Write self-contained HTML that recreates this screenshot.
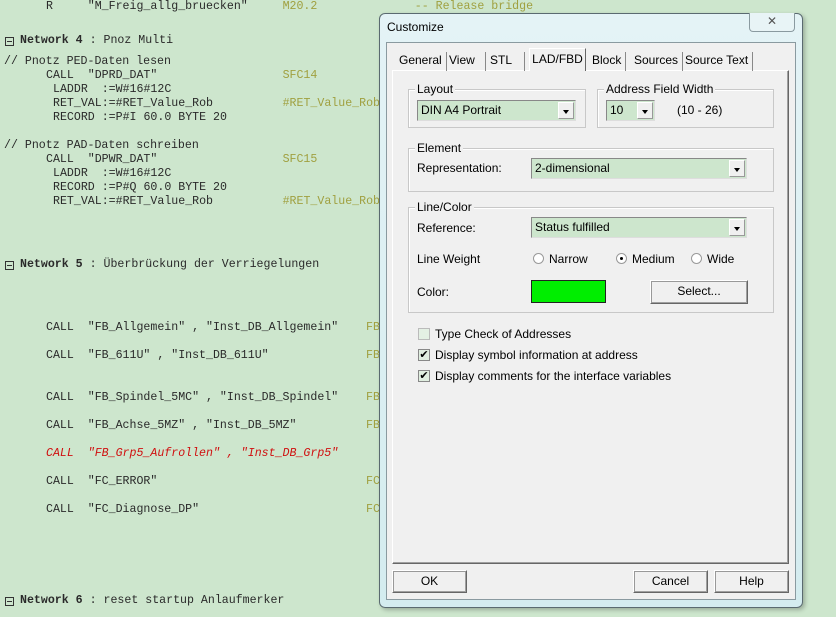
<!DOCTYPE html>
<html><head><meta charset="utf-8"><style>
*{margin:0;padding:0;box-sizing:border-box}
body{width:836px;height:617px;overflow:hidden;background:#cde6cd;position:relative;font-family:"Liberation Sans",sans-serif}
.c{position:absolute;font-family:"Liberation Mono","Courier New",monospace;font-size:11.6px;color:#2a2a2a;white-space:pre;line-height:14px}
.y{color:#a0a040}
.r{color:#d01010;font-style:italic}
.nb{font-weight:bold}
.bx{position:absolute;width:9px;height:9px;border:1px solid #333;left:5px}
.bx:after{content:"";position:absolute;left:1px;top:3px;width:5px;height:1px;background:#333}
.d{font-size:12px;color:#000;position:absolute;white-space:nowrap}
.grp{position:absolute;border:1px solid #c8c8c8;box-shadow:inset 1px 1px 0 #fff}
.lg{position:absolute;background:#f0f0f0;font-size:12px;padding:0 2px;top:-8px;left:6px;line-height:14px}
.combo{position:absolute;background:#cde6cd;border:1px solid #888;border-right-color:#ddd;border-bottom-color:#ddd;font-size:12px;padding:2px 3px;height:21px;line-height:15px}
.dd{position:absolute;right:1px;top:1px;width:16px;height:17px;background:#f0f0f0;border:1px solid #999;border-top-color:#fff;border-left-color:#fff}
.dd:after{content:"";position:absolute;left:4px;top:7px;border:3px solid transparent;border-top:4px solid #000}
.btn{position:absolute;background:#f0f0f0;border:1px solid #fff;border-right-color:#666;border-bottom-color:#666;box-shadow:1px 1px 0 #999 inset,inset -1px -1px 0 #a0a0a0;font-size:12px;text-align:center;line-height:21px}
.cb{position:absolute;width:12px;height:12px;border:1px solid #888;background:#fff;font-size:11px;line-height:10px;text-align:center}
.rad{position:absolute;width:11px;height:11px;border-radius:50%;border:1px solid #999;background:#fff}
.tab{position:absolute;top:52px;height:19px;font-size:12px;line-height:17px;padding:0 4px;border-right:1px solid #888;color:#000}
</style></head><body>
<div class="c" style="left:46px;top:0">R     "M_Freig_allg_bruecken"     <span class="y">M20.2</span>              <span class="y">-- Release bridge</span></div>
<div class="bx" style="top:37px"></div><div class="c nb" style="left:20px;top:34px">Network 4<span style="font-weight:normal"> : Pnoz Multi</span></div>
<div class="c" style="left:4px;top:55px">// Pnotz PED-Daten lesen</div>
<div class="c" style="left:46px;top:69px">CALL  "DPRD_DAT"                  <span class="y">SFC14</span></div>
<div class="c" style="left:53px;top:83px">LADDR  :=W#16#12C</div>
<div class="c" style="left:53px;top:97px">RET_VAL:=#RET_Value_Rob          <span class="y">#RET_Value_Rob</span></div>
<div class="c" style="left:53px;top:111px">RECORD :=P#I 60.0 BYTE 20</div>
<div class="c" style="left:4px;top:139px">// Pnotz PAD-Daten schreiben</div>
<div class="c" style="left:46px;top:153px">CALL  "DPWR_DAT"                  <span class="y">SFC15</span></div>
<div class="c" style="left:53px;top:167px">LADDR  :=W#16#12C</div>
<div class="c" style="left:53px;top:181px">RECORD :=P#Q 60.0 BYTE 20</div>
<div class="c" style="left:53px;top:195px">RET_VAL:=#RET_Value_Rob          <span class="y">#RET_Value_Rob</span></div>
<div class="bx" style="top:261px"></div><div class="c nb" style="left:20px;top:258px">Network 5<span style="font-weight:normal"> : Überbrückung der Verriegelungen</span></div>
<div class="c" style="left:46px;top:321px">CALL  "FB_Allgemein" , "Inst_DB_Allgemein"    <span class="y">FB</span></div>
<div class="c" style="left:46px;top:349px">CALL  "FB_611U" , "Inst_DB_611U"              <span class="y">FB</span></div>
<div class="c" style="left:46px;top:391px">CALL  "FB_Spindel_5MC" , "Inst_DB_Spindel"    <span class="y">FB</span></div>
<div class="c" style="left:46px;top:419px">CALL  "FB_Achse_5MZ" , "Inst_DB_5MZ"          <span class="y">FB</span></div>
<div class="c r" style="left:46px;top:447px">CALL  "FB_Grp5_Aufrollen" , "Inst_DB_Grp5"</div>
<div class="c" style="left:46px;top:475px">CALL  "FC_ERROR"                              <span class="y">FC</span></div>
<div class="c" style="left:46px;top:503px">CALL  "FC_Diagnose_DP"                        <span class="y">FC</span></div>
<div class="bx" style="top:597px"></div><div class="c nb" style="left:20px;top:594px">Network 6<span style="font-weight:normal"> : reset startup Anlaufmerker</span></div>

<!-- dialog -->
<div style="position:absolute;left:379px;top:13px;width:424px;height:595px;background:linear-gradient(#e4f3f6,#d4ecef);border:1px solid #5a6a70;border-radius:6px;box-shadow:2px 2px 4px rgba(0,0,0,.25)"></div>
<div class="d" style="left:387px;top:20px;font-size:12px">Customize</div>
<div style="position:absolute;left:749px;top:13px;width:46px;height:19px;border:1px solid #8a9aa0;border-top:none;border-radius:0 0 4px 4px;background:#e8f4f6;text-align:center;font-size:12px;color:#555;line-height:17px">✕</div>
<div style="position:absolute;left:386px;top:42px;width:410px;height:558px;background:#f0f0f0;border:1px solid #8a9aa0"></div>
<!-- tab panel -->
<div style="position:absolute;left:392px;top:70px;width:397px;height:494px;border:1px solid #fff;border-right-color:#666;border-bottom-color:#666;box-shadow:inset -1px -1px 0 #a0a0a0"></div>
<div class="tab" style="left:395px">General</div>
<div class="tab" style="left:445px;padding-right:10px">View</div>
<div class="tab" style="left:486px;padding-right:12px">STL</div>
<div style="position:absolute;left:529px;top:48px;width:57px;height:23px;background:#f0f0f0;border:1px solid #fff;border-right-color:#666;border-bottom:none;font-size:12px;text-align:center;line-height:20px">LAD/FBD</div>
<div class="tab" style="left:588px">Block</div>
<div class="tab" style="left:630px">Sources</div>
<div class="tab" style="left:681px">Source Text</div>

<div class="grp" style="left:408px;top:89px;width:178px;height:39px"><span class="lg">Layout</span></div>
<div class="combo" style="left:417px;top:100px;width:159px">DIN A4 Portrait<div class="dd"></div></div>
<div class="grp" style="left:597px;top:89px;width:177px;height:39px"><span class="lg">Address Field Width</span></div>
<div class="combo" style="left:606px;top:100px;width:49px">10<div class="dd" style="height:17px;background:#f0f0f0"></div></div>
<div class="d" style="left:677px;top:103px">(10 - 26)</div>

<div class="grp" style="left:408px;top:148px;width:366px;height:44px"><span class="lg">Element</span></div>
<div class="d" style="left:417px;top:161px">Representation:</div>
<div class="combo" style="left:531px;top:158px;width:216px">2-dimensional<div class="dd"></div></div>

<div class="grp" style="left:408px;top:207px;width:366px;height:106px"><span class="lg">Line/Color</span></div>
<div class="d" style="left:417px;top:221px">Reference:</div>
<div class="combo" style="left:531px;top:217px;width:216px">Status fulfilled<div class="dd"></div></div>
<div class="d" style="left:417px;top:252px">Line Weight</div>
<div class="rad" style="left:533px;top:253px"></div><div class="d" style="left:549px;top:252px">Narrow</div>
<div class="rad" style="left:616px;top:253px"><div style="position:absolute;left:3px;top:3px;width:3px;height:3px;background:#000;border-radius:50%"></div></div><div class="d" style="left:632px;top:252px">Medium</div>
<div class="rad" style="left:691px;top:253px"></div><div class="d" style="left:707px;top:252px">Wide</div>
<div class="d" style="left:417px;top:285px">Color:</div>
<div style="position:absolute;left:531px;top:280px;width:75px;height:23px;background:#00ee00;border:1px solid #222"></div>
<div class="btn" style="left:650px;top:280px;width:98px;height:24px">Select...</div>

<div class="cb" style="left:418px;top:328px;border-color:#bbb;background:#e4f0e4"></div><div class="d" style="left:435px;top:327px">Type Check of Addresses</div>
<div class="cb" style="left:418px;top:349px;background:#e0eee0">✔</div><div class="d" style="left:435px;top:348px">Display symbol information at address</div>
<div class="cb" style="left:418px;top:370px;background:#e0eee0">✔</div><div class="d" style="left:435px;top:369px">Display comments for the interface variables</div>

<div class="btn" style="left:392px;top:570px;width:75px;height:23px">OK</div>
<div class="btn" style="left:633px;top:570px;width:75px;height:23px">Cancel</div>
<div class="btn" style="left:714px;top:570px;width:75px;height:23px">Help</div>
</body></html>
